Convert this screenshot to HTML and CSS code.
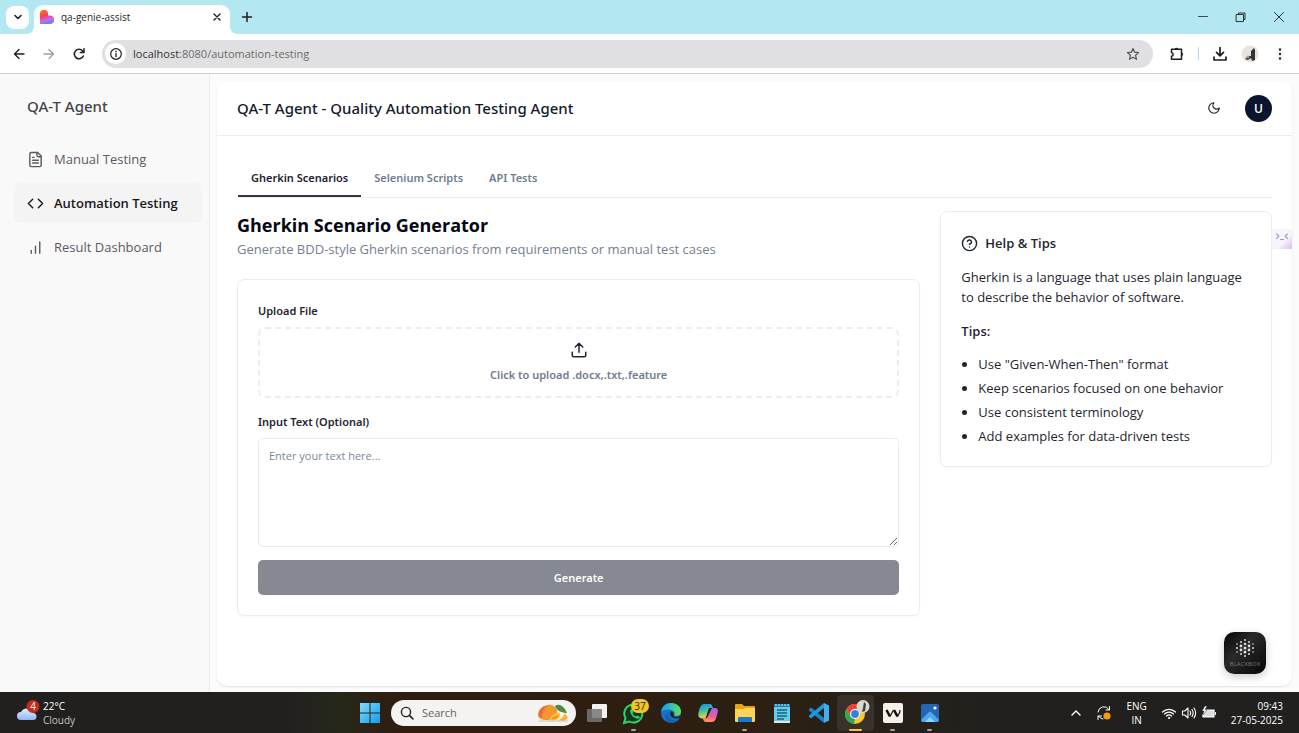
FILE: index.html
```html
<!DOCTYPE html>
<html lang="en">
<head>
<meta charset="utf-8">
<title>qa-genie-assist</title>
<link rel="stylesheet" href="styles.css">
</head>
<body>
<div class="tabstrip">
  <button class="tab-search" aria-label="Search tabs"><svg class="icon" width="12" height="12" viewBox="0 0 12 12"><path d="M3 4.500l3 3 3-3" stroke-width="1.600"/></svg></button>
  <div class="browser-tab">
    <svg width="14" height="14" viewBox="0 0 14 14"><defs><linearGradient id="heart" x1="0" y1="0" x2="0.3" y2="1"><stop offset="0.1" stop-color="#ff7a1a"/><stop offset="0.45" stop-color="#fb3b50"/><stop offset="0.8" stop-color="#c36cf5"/><stop offset="1" stop-color="#6f7cff"/></linearGradient></defs><path d="M0 4a4 4 0 0 1 8-.5V5.500h2a4 4 0 0 1 0 8.500H0z" fill="url(#heart)"/></svg>
    <span class="tab-title">qa-genie-assist</span>
    <button class="plain" aria-label="Close tab"><svg class="icon" width="10" height="10" viewBox="0 0 10 10"><path d="M2 2l6 6M8 2L2 8" stroke-width="1.400"/></svg></button>
  </div>
  <button class="plain new-tab" aria-label="New tab"><svg class="icon" width="12" height="12" viewBox="0 0 12 12"><path d="M6 1.500v9M1.500 6h9" stroke-width="1.500"/></svg></button>
  <div class="window-controls">
    <button class="plain" aria-label="Minimize"><svg class="icon" width="12" height="12" viewBox="0 0 12 12"><path d="M1.500 5.500h9" stroke-width=".8"/></svg></button>
    <button class="plain" aria-label="Restore"><svg class="icon" width="12" height="12" viewBox="0 0 12 12"><path d="M1.500 3.500h7v7h-7zM3.500 3.500V2h6.500v6.500H8.500" stroke-width=".9"/></svg></button>
    <button class="plain" aria-label="Close"><svg class="icon" width="12" height="12" viewBox="0 0 12 12"><path d="M1.500 1.500l9 9M10.500 1.500l-9 9" stroke-width=".9"/></svg></button>
  </div>
</div>
<div class="toolbar">
  <button class="plain" aria-label="Back"><svg class="icon" width="14" height="14" viewBox="0 0 14 14"><path d="M12 7H2.500M7 2.500L2.500 7 7 11.500" stroke-width="1.400"/></svg></button>
  <button class="plain faded" aria-label="Forward"><svg class="icon" width="14" height="14" viewBox="0 0 14 14"><path d="M2 7h9.500M7 2.500L11.500 7 7 11.500" stroke-width="1.400"/></svg></button>
  <button class="plain" aria-label="Reload"><svg class="icon" width="14" height="14" viewBox="0 0 14 14"><path d="M11.300 9A4.700 4.700 0 1 1 10.600 4L12 5.400M12 1.800v3.700H8.300" stroke-width="1.500"/></svg></button>
  <div class="address">
    <span class="site-info"><svg class="icon" width="14" height="14" viewBox="0 0 14 14"><circle cx="7" cy="7" r="5.300" stroke-width="1.200"/><path d="M7 6.500v3.200M7 4.200v.5" stroke-width="1.300"/></svg></span>
    <span class="url">localhost<span class="url-rest">:8080/automation-testing</span></span>
    <button class="plain star" aria-label="Bookmark"><svg class="icon" width="14" height="14" viewBox="0 0 14 14"><path d="M7 1.500l1.600 3.700 4 .4-3 2.700.9 4L7 10.200l-3.500 2.100.9-4-3-2.700 4-.4z" stroke-width="1.200"/></svg></button>
  </div>
  <div class="toolbar-actions">
    <button class="plain" aria-label="Extensions"><svg class="icon" width="16" height="16" viewBox="0 0 16 16"><path d="M2.500 3.200H12.500V13.300H2.500V10.300c2.200-.6 2.200-3.200 0-3.800z" stroke-width="1.500"/><path d="M5.800 3a1.900 1.900 0 0 1 3.600 0zM12.800 6.500a1.900 1.900 0 0 1 0 3.600z" fill="#1f1f1f" stroke="none"/></svg></button>
    <span class="divider"></span>
    <button class="plain" aria-label="Downloads"><svg class="icon" width="16" height="16" viewBox="0 0 16 16"><path d="M8 1.500v8M4.500 6.300L8 9.800l3.500-3.500M2 11v3h12v-3" stroke-width="1.700"/></svg></button>
    <button class="plain" aria-label="Profile"><svg width="18" height="18" viewBox="0 0 18 18"><circle cx="9" cy="9" r="8.500" fill="#e9e3df"/><path d="M10 6l3-3 1 2v10l-3 1-1-3-3 2-3-1 3-3h3z" fill="#333"/><circle cx="7" cy="12" r="1.500" fill="#999"/></svg></button>
    <button class="plain" aria-label="Menu"><svg width="16" height="16" viewBox="0 0 16 16" fill="#1f1f1f"><circle cx="8" cy="3.500" r="1.200"/><circle cx="8" cy="8" r="1.200"/><circle cx="8" cy="12.500" r="1.200"/></svg></button>
  </div>
</div>

<div class="app">
  <aside class="sidebar">
    <div class="brand">QA-T Agent</div>
    <nav class="side-nav">
      <a href="#manual" class="side-link"><svg class="icon" width="17" height="17" viewBox="0 0 24 24"><path d="M15 2H6a2 2 0 0 0-2 2v16a2 2 0 0 0 2 2h12a2 2 0 0 0 2-2V7z"/><path d="M14 2v4a2 2 0 0 0 2 2h4M10 9H8M16 13H8M16 17H8"/></svg>Manual Testing</a>
      <a href="#automation" class="side-link active" aria-current="page"><svg class="icon" width="17" height="17" viewBox="0 0 24 24"><path d="M16 18l6-6-6-6M8 6l-6 6 6 6"/></svg>Automation Testing</a>
      <a href="#results" class="side-link"><svg class="icon" width="17" height="17" viewBox="0 0 24 24"><path d="M12 20V10M18 20V4M6 20v-4"/></svg>Result Dashboard</a>
    </nav>
  </aside>
  <main class="panel">
    <header class="panel-header">
      <h1 class="app-title">QA-T Agent - Quality Automation Testing Agent</h1>
      <button class="plain theme" aria-label="Toggle theme"><svg class="icon" width="14" height="14" viewBox="0 0 24 24"><path d="M12 3a6 6 0 0 0 9 9 9 9 0 1 1-9-9z"/></svg></button>
      <button class="avatar" aria-label="User menu">U</button>
    </header>
    <div class="content">
      <div class="tabs" role="tablist">
        <button class="tab selected" role="tab" aria-selected="true">Gherkin Scenarios</button>
        <button class="tab" role="tab" aria-selected="false">Selenium Scripts</button>
        <button class="tab" role="tab" aria-selected="false">API Tests</button>
      </div>
      <div class="columns">
        <section class="generator">
          <h2 class="page-title">Gherkin Scenario Generator</h2>
          <p class="subtitle">Generate BDD-style Gherkin scenarios from requirements or manual test cases</p>
          <form class="card form">
            <span class="field-label" id="upload-label">Upload File</span>
            <button type="button" class="dropzone" aria-describedby="upload-label"><svg class="icon" width="20" height="20" viewBox="0 0 24 24"><path d="M21 15v4a2 2 0 0 1-2 2H5a2 2 0 0 1-2-2v-4M17 8l-5-5-5 5M12 3v12"/></svg>Click to upload .docx,.txt,.feature</button>
            <label class="field-label" for="input-text">Input Text (Optional)</label>
            <textarea id="input-text" class="text-input" placeholder="Enter your text here..."></textarea>
            <button type="button" class="generate">Generate</button>
          </form>
        </section>
        <aside class="card help">
          <h3 class="help-title"><svg class="icon" width="17" height="17" viewBox="0 0 24 24"><circle cx="12" cy="12" r="10"/><path d="M9.100 9a3 3 0 0 1 5.800 1c0 2-3 3-3 3M12 17h.01"/></svg>Help &amp; Tips</h3>
          <p class="help-text">Gherkin is a language that uses plain language to describe the behavior of software.</p>
          <p class="tips-label">Tips:</p>
          <ul class="tips">
            <li>Use "Given-When-Then" format</li>
            <li>Keep scenarios focused on one behavior</li>
            <li>Use consistent terminology</li>
            <li>Add examples for data-driven tests</li>
          </ul>
        </aside>
      </div>
    </div>
  </main>
  <button class="side-handle" aria-label="Open assistant"><svg class="icon" width="14" height="10" viewBox="0 0 14 10"><path d="M1.500 2l2.500 2.200L1.500 6.500M12.500 2L10 4.200l2.500 2.300M5.500 7.500h3" stroke-width="1.100"/></svg></button>
  <button class="blackbox" aria-label="Blackbox">
    <svg width="24" height="22" viewBox="0 0 24 22" fill="#ddd"><circle cx="12" cy="2" r="1"/><circle cx="8" cy="4" r="1"/><circle cx="16" cy="4" r="1"/><circle cx="4" cy="6" r=".8"/><circle cx="12" cy="6" r="1.300"/><circle cx="20" cy="6" r=".8"/><circle cx="8" cy="8" r="1.400"/><circle cx="16" cy="8" r="1.400"/><circle cx="4" cy="10" r="1"/><circle cx="12" cy="10" r="1.500"/><circle cx="20" cy="10" r="1"/><circle cx="8" cy="12" r="1.400"/><circle cx="16" cy="12" r="1.400"/><circle cx="4" cy="14" r=".8"/><circle cx="12" cy="14" r="1.500"/><circle cx="20" cy="14" r=".8"/><circle cx="8" cy="16" r="1"/><circle cx="16" cy="16" r="1"/><circle cx="12" cy="18" r="1"/></svg>
    <span>BLACKBOX</span>
  </button>
</div>

<footer class="taskbar">
  <div class="weather">
    <svg width="24" height="26" viewBox="0 0 24 26"><defs><linearGradient id="cloud" x1="0" y1="0" x2="0" y2="1"><stop offset="0" stop-color="#e4edff"/><stop offset="1" stop-color="#8fb5f5"/></linearGradient></defs><path d="M5 20a4 4 0 0 1 0-8 6.500 6.500 0 0 1 12 1 3.500 3.500 0 0 1 0 7z" fill="url(#cloud)"/><circle cx="17" cy="6.500" r="6.500" fill="#c42b1c"/><text x="17" y="10" class="badge-text badge-light">4</text></svg>
    <div class="weather-text"><span class="temperature">22°C</span><span class="condition">Cloudy</span></div>
  </div>
  <div class="dock">
    <button class="dock-item" aria-label="Start"><svg width="20" height="20" viewBox="0 0 20 20"><defs><linearGradient id="win" x1="0" y1="0" x2="1" y2="1"><stop offset="0" stop-color="#7fdcff"/><stop offset="1" stop-color="#139be8"/></linearGradient></defs><path d="M0 0h9.500v9.500H0zM10.500 0H20v9.500h-9.500zM0 10.500h9.500V20H0zM10.500 10.500H20V20h-9.500z" fill="url(#win)"/></svg></button>
    <label class="search"><svg class="icon" width="14" height="14" viewBox="0 0 14 14"><circle cx="6" cy="6" r="4.600" stroke-width="1.400"/><path d="M9.400 9.400L13 13" stroke-width="1.600"/></svg><input type="text" placeholder="Search" aria-label="Search">
      <svg width="34" height="20" viewBox="0 0 34 20"><path d="M2 11C3 5 9 1 15 2c5 1 7 5 6 9s-5 6-10 6-10-2-9-6z" fill="#f5952f"/><path d="M3 12c-1-5 3-9 9-9-4 2-6 5-6 12-2-1-3-2-3-3z" fill="#ea6a44"/><path d="M19 3c4-3 9 0 12 7-5 0-10-2-12-7z" fill="#4d8a46"/><path d="M13 17c3-6 8-8 11-7 1 5-3 9-11 7z" fill="#ffc53a"/><path d="M15 16c3-3 6-4 8-4-1 3-4 5-8 4z" fill="#f08f1e"/><path d="M20 17c4 0 7-2 8-6 5 1 5 6-1 7z" fill="#f9b32c"/><path d="M3 18h29" stroke="#cdbfb2"/></svg>
    </label>
    <button class="dock-item" aria-label="Task view"><svg width="22" height="22" viewBox="0 0 22 22"><rect x="6" y="2" width="15" height="14" rx="1" fill="#f2f2f2"/><rect x="1" y="7" width="15" height="13" rx="1" fill="#777" opacity=".85"/></svg></button>
    <button class="dock-item running" aria-label="WhatsApp"><svg width="30" height="28" viewBox="0 0 30 28"><path d="M5 24l1.500-5a9 9 0 1 1 3.800 3.600z" fill="#17351f" stroke="#2bd366" stroke-width="2"/><path d="M11 11l2-1 1.500 3-1 1.500c1 1.500 2 2.500 3.500 3l1.500-1 2.500 1.500c-1 4-10 .5-10-7z" fill="#2bd366"/><rect x="12" y="0" width="18" height="14" rx="7" fill="#f5c71a"/><text x="21" y="11" class="badge-text badge-dark">37</text></svg></button>
    <button class="dock-item" aria-label="Edge"><svg width="22" height="22" viewBox="0 0 22 22"><defs><linearGradient id="edge" x1="0" y1="0.2" x2="1" y2="0.3"><stop offset="0.2" stop-color="#1fa8e8"/><stop offset="1" stop-color="#62dd5c"/></linearGradient></defs><circle cx="11" cy="11" r="10" fill="#1473cc"/><path d="M1 10C2 4 6 1 11 1c6 0 10 4 10 8.500 0 4-4 5-7 4 2-2 0-6-5-6-4 0-7 1-8 2.500z" fill="url(#edge)"/><path d="M9 10c-2 4 1 9 7 8 2 0 3-1 4-2-2 4-6 5-9 5-6-1-8-8-2-11z" fill="#1a5fae"/><path d="M11 9.500c3 0 3 3 2.500 4 1.500 2 5 1.500 7.500 0l-.7 2.200c-3 1.300-8 1-9.500-1.700-1-1.700-.8-3.500.2-4.500z" fill="#2b2114"/></svg></button>
    <button class="dock-item" aria-label="Copilot"><svg width="22" height="22" viewBox="0 0 22 22"><defs><linearGradient id="cop1" x1="0" y1="0" x2="0.2" y2="1"><stop offset="0" stop-color="#2686f0"/><stop offset="0.5" stop-color="#35bfa4"/><stop offset="1" stop-color="#f3d33b"/></linearGradient><linearGradient id="cop2" x1="0.5" y1="0" x2="0.4" y2="1"><stop offset="0" stop-color="#9a65f0"/><stop offset="0.6" stop-color="#ef5c9c"/><stop offset="1" stop-color="#ff9a55"/></linearGradient></defs><path d="M7 2h6c2 0 2 2 3 4h-4L9 15c-1 2-5 2-7 0-2-2 1-10 2-11 .5-1 1.500-2 3-2z" fill="url(#cop1)"/><path d="M15 6h3c4 0 3 4 2 7-1 4-2 7-5 7H9c-2 0-3-2-3-4h4z" fill="url(#cop2)"/></svg></button>
    <button class="dock-item running" aria-label="File Explorer"><svg width="22" height="22" viewBox="0 0 22 22"><path d="M1 3q0-1 1-1h6l2 2h10q1 0 1 1v6H1z" fill="#e2a31f"/><path d="M1 7h9l2-1h9v13q0 1-1 1H2q-1 0-1-1z" fill="#ffd352"/><path d="M4 20v-4q0-1 1-1h12q1 0 1 1v4z" fill="#1a79c9"/></svg></button>
    <button class="dock-item" aria-label="Notepad"><svg width="22" height="22" viewBox="0 0 22 22"><rect x="3" y="2" width="16" height="19" rx="1" fill="#62cdec"/><path d="M3 19h16v2H3z" fill="#e4e4e4"/><path d="M3 2h16v3H3z" fill="#267b9b"/><path d="M5 2v2M8 2v2M11 2v2M14 2v2M17 2v2" stroke="#caefff"/><path d="M6 8h10M6 11h10M6 14h10M6 17h7" stroke="#17617f" stroke-width="1.300"/></svg></button>
    <button class="dock-item" aria-label="Visual Studio Code"><svg width="22" height="22" viewBox="0 0 22 22"><path d="M1 7l2-1.500L16 16v5L1 8.500z" fill="#1684cc"/><path d="M1 15l2 1.500L16 6V1L1 13.500z" fill="#2196e3"/><path d="M16 1l5 2.500v15L16 21z" fill="#42aef0"/></svg></button>
    <button class="dock-item current" aria-label="Chrome"><svg width="30" height="28" viewBox="0 0 30 28"><circle cx="14" cy="15" r="10" fill="#fbc72b"/><path d="M5.300 10A10 10 0 0 1 22.700 10H14l-4.300 7.500z" fill="#e94335"/><path d="M5.300 10l4.400 7.500L14 20l-1 5A10 10 0 0 1 5.300 10z" fill="#31a853"/><circle cx="14" cy="15" r="5" fill="#fff"/><circle cx="14" cy="15" r="3.900" fill="#347ee8"/><circle cx="22" cy="7.500" r="6.500" fill="#d8d7d4"/><path d="M23 3l2 2-1 7-3 1 1-4z" fill="#3c3c3c"/></svg></button>
    <button class="dock-item running" aria-label="W app"><svg width="22" height="22" viewBox="0 0 22 22"><rect x="1" y="1" width="20" height="20" rx="2" fill="#f6f1e6"/><path d="M4.500 8l3.500 6.500M12 8l3.500 6.500" fill="none" stroke="#111" stroke-width="2.600"/><path d="M8 14.500L11.500 8M15.500 14.500L17.800 10V8" fill="none" stroke="#111" stroke-width="1.200"/></svg></button>
    <button class="dock-item running" aria-label="Photos"><svg width="22" height="22" viewBox="0 0 22 22"><rect x="2" y="2" width="18" height="18" rx="2" fill="#2664b5"/><path d="M2 18l8-8q1-1 2 0l8 8q0 2-2 2H4q-2 0-2-2z" fill="#4ba7ef"/><path d="M6 20l5-5 5 5z" fill="#8cd5ff"/><circle cx="16" cy="6" r="1.600" fill="#fff"/></svg></button>
  </div>
  <div class="tray">
    <svg class="icon" width="12" height="12" viewBox="0 0 12 12"><path d="M2 8l4-4 4 4" stroke-width="1.400"/></svg>
    <svg class="icon sync" width="16" height="16" viewBox="0 0 16 16"><path d="M2 7a6 6 0 0 1 11-2.500M13.500 1.500v3.500H10M7 14a6 6 0 0 1-4.500-3M2 14.500V11h3.500" stroke-width="1"/><circle cx="11" cy="11" r="3.600" fill="#f59b0b" stroke="none"/></svg>
    <div class="language"><span>ENG</span><span>IN</span></div>
    <div class="status">
      <svg class="icon" width="16" height="14" viewBox="0 0 16 14"><path d="M1.500 6a9.200 9.200 0 0 1 13 0M3.500 8a6.400 6.400 0 0 1 9 0M5.500 10a3.500 3.500 0 0 1 5 0" stroke-width="1.200"/><circle cx="8" cy="12" r=".7" stroke-width="1"/></svg>
      <svg class="icon" width="16" height="14" viewBox="0 0 16 14"><path d="M1.500 5h2.300L7 2v10L3.800 9H1.500zM9 5q1.300 2 0 4M11 3.500q2.300 3.500 0 7M13 2q3.300 5 0 10" stroke-width="1.100"/></svg>
      <svg width="16" height="14" viewBox="0 0 16 14"><path d="M4 4h9v7H2V8" fill="#ddd" stroke="#fff" stroke-width="1.200"/><path d="M14 6h1v3h-1z" fill="#fff"/><path d="M4 0L1 5h2L2 9l4-5H4l2-4z" fill="#fff" stroke="#222" stroke-width=".4"/></svg>
    </div>
    <div class="clock"><span>09:43</span><span>27-05-2025</span></div>
  </div>
</footer>
</body>
</html>
```

FILE: styles.css
```css
* { box-sizing: border-box; }

body {
  margin: 0;
  height: 100vh;
  display: flex;
  flex-direction: column;
  overflow: hidden;
  font-family: "Open Sans", "Noto Sans", sans-serif;
  font-size: 13px;
  color: #1f2530;
  background: #fbfbfb;
}

h1, h2, h3, p, ul { margin: 0; }
button, input, textarea { font: inherit; color: inherit; }
button { border: 0; padding: 0; background: none; display: flex; align-items: center; justify-content: center; }
svg { display: block; flex: none; }
.icon { fill: none; stroke: currentColor; stroke-width: 2; stroke-linecap: round; stroke-linejoin: round; }

/* Medium-weight text */
.brand, .app-title, .tab, .field-label, .dropzone, .generate { font-family: "Noto Sans", "Open Sans", sans-serif; }

/* Browser chrome */
.tabstrip { flex: none; height: 34px; display: flex; align-items: center; background: #b3e7f2; color: #1f1f1f; padding-left: 6px; }
.tab-search { width: 23px; height: 23px; border-radius: 8px; background: #fff; }
.browser-tab { position: relative; width: 196px; height: 29px; margin: 5px 0 0 5px; padding: 0 8px 5px 6px; display: flex; align-items: center; gap: 7px; background: #fff; border-radius: 9px 9px 0 0; }
.browser-tab::before, .browser-tab::after { content: ""; position: absolute; bottom: 0; width: 8px; height: 8px; }
.browser-tab::before { left: -8px; background: radial-gradient(circle at 0 0, transparent 8px, #fff 8px); }
.browser-tab::after { right: -8px; background: radial-gradient(circle at 100% 0, transparent 8px, #fff 8px); }
.tab-title { flex: 1; font-size: 10px; }
.new-tab { margin-left: 11px; }
.window-controls { margin-left: auto; display: flex; gap: 26px; padding-right: 14px; }

.toolbar { flex: none; height: 40px; display: flex; align-items: center; background: #fff; border-bottom: 1px solid #cfcfcf; color: #1f1f1f; padding: 0 11px 0 12px; gap: 16px; }
.faded { color: #a0a0a0; }
.address { flex: 1; height: 28px; display: flex; align-items: center; background: #e0e0e2; border-radius: 14px; padding: 0 13px 0 3px; }
.site-info { width: 21px; height: 21px; border-radius: 50%; background: #fff; display: flex; align-items: center; justify-content: center; margin-right: 7px; }
.url { font-size: 11px; color: #333; }
.url-rest { color: #6b6b6b; }
.star { margin-left: auto; color: #555; }
.toolbar-actions { display: flex; align-items: center; gap: 13px; }
.divider { width: 1px; height: 13px; background: #a8dfec; }

/* Application */
.app { position: relative; flex: 1; min-height: 0; display: flex; background: #fbfbfc; }
.sidebar { width: 210px; border-right: 1px solid #ebebed; background: #faf9fa; padding: 20px 7px 0 14px; }
.brand { padding-left: 13px; font-size: 15px; line-height: 24px; font-weight: 500; color: #454549; }
.side-nav { display: flex; flex-direction: column; gap: 4px; margin-top: 21px; }
.side-link { display: flex; align-items: center; gap: 10px; height: 40px; padding: 0 13px; border-radius: 6px; font-size: 13px; color: #5a5a60; text-decoration: none; }
.side-link.active { background: #f4f4f5; color: #18181b; font-weight: 600; }

.panel { flex: 1; min-width: 0; margin: 7px 7px 6px; background: #fff; border-radius: 10px; box-shadow: 0 1px 2px rgba(0, 0, 0, 0.1); }
.panel-header { display: flex; align-items: center; height: 55px; padding: 0 20px; border-bottom: 1px solid #ececee; }
.app-title { flex: 1; font-size: 15px; font-weight: 500; color: #131a2e; }
.theme { margin-right: 24px; }
.avatar { width: 27px; height: 27px; border-radius: 50%; background: #0b142c; color: #fff; font-size: 12px; font-weight: 600; }

.content { padding: 22px 20px 0; }
.tabs { display: flex; height: 40px; border-bottom: 1px solid #ececee; padding-left: 1px; }
.tab { padding: 2px 13px 0; font-size: 11px; font-weight: 600; color: #6f7c8f; border-bottom: 2px solid transparent; }
.tab.selected { color: #1c2230; border-bottom-color: #343842; }

.columns { display: grid; grid-template-columns: repeat(3, 1fr); align-items: start; gap: 20px; padding-top: 13px; }
.generator { grid-column: span 2; }
.page-title { font-size: 18px; line-height: 28px; font-weight: 700; color: #030712; }
.subtitle { font-size: 13px; line-height: 20px; color: #74808f; }
.card { border: 1px solid #ececef; border-radius: 7px; background: #fff; box-shadow: 0 1px 2px rgba(0, 0, 0, 0.03); padding: 20px; }
.form { display: flex; flex-direction: column; margin-top: 20px; padding-top: 21px; }
.field-label { font-size: 11px; line-height: 20px; font-weight: 600; margin-bottom: 6px; }
.dropzone { flex-direction: column; gap: 6px; height: 71px; margin-bottom: 14px; border: 2px dashed #ededf0; border-radius: 7px; font-size: 11px; line-height: 20px; font-weight: 600; color: #6f7c8f; }
.dropzone .icon { width: 18px; height: 18px; color: #1f2530; }
.text-input { height: 109px; padding: 8px 10px; border: 1px solid #ebebee; border-radius: 5px; font-size: 11px; line-height: 17px; resize: vertical; outline: 0; }
.text-input::placeholder { color: #7b8794; }
.generate { height: 35px; margin-top: 13px; border-radius: 5px; background: #868892; color: #fff; font-size: 11px; font-weight: 600; }

.help { min-height: 256px; font-size: 13px; line-height: 20px; }
.help-title { display: flex; align-items: center; gap: 7px; font-size: 13px; line-height: 22px; font-weight: 600; }
.help-text { margin-top: 13px; }
.tips-label { margin-top: 14px; font-weight: 600; }
.tips { margin-top: 13px; padding-left: 17px; display: flex; flex-direction: column; gap: 4px; }

.side-handle { position: absolute; right: 7px; top: 155px; width: 20px; height: 20px; padding-bottom: 4px; background: linear-gradient(135deg, #f5f4fc 60%, #d9bdf5); color: #9a9dab; }
.blackbox { position: absolute; right: 33px; bottom: 18px; width: 42px; height: 42px; flex-direction: column; border-radius: 10px; background: linear-gradient(135deg, #050505, #2a2a2a 40%, #050505); box-shadow: 0 3px 8px rgba(0, 0, 0, 0.2); color: #777; font-size: 6px; line-height: 8px; }

/* Desktop taskbar */
.taskbar { flex: none; height: 41px; display: grid; grid-template-columns: 1fr auto 1fr; align-items: center; padding: 0 16px; background: linear-gradient(90deg, #22201f 22%, #252719 26%, #301d10 31%, #2b2013 60%, #21201f 78%); color: #fff; font-size: 10px; line-height: 14px; }
.weather { display: flex; align-items: center; gap: 3px; }
.weather-text { display: flex; flex-direction: column; }
.condition { color: #c4c4c4; }
.badge-text { font-size: 10px; text-anchor: middle; }
.badge-light { fill: #fff; }
.badge-dark { fill: #222; }
.dock { display: flex; align-items: center; }
.dock-item { position: relative; width: 37px; height: 36px; border-radius: 4px; }
.dock-item.running::after, .dock-item.current::after { content: ""; position: absolute; bottom: 0; width: 5px; height: 2px; border-radius: 1px; background: #a5a5a5; }
.dock-item.current { background: #38322a; }
.dock-item.current::after { width: 13px; background: #f8c846; }
.search { display: flex; align-items: center; gap: 8px; width: 185px; height: 26px; margin: 0 2px 0 3px; padding: 0 6px 0 9px; border-radius: 13px; background: #f5f3f1; color: #222; }
.search input { flex: 1; min-width: 0; border: 0; padding: 0; background: none; font-size: 11px; outline: 0; }
.search input::placeholder { color: #626262; }
.tray { display: flex; align-items: center; justify-content: flex-end; }
.sync { margin: 0 14px; }
.language { display: flex; flex-direction: column; align-items: center; }
.status { display: flex; gap: 4px; margin: 0 14px; }
.clock { display: flex; flex-direction: column; align-items: flex-end; }
```
